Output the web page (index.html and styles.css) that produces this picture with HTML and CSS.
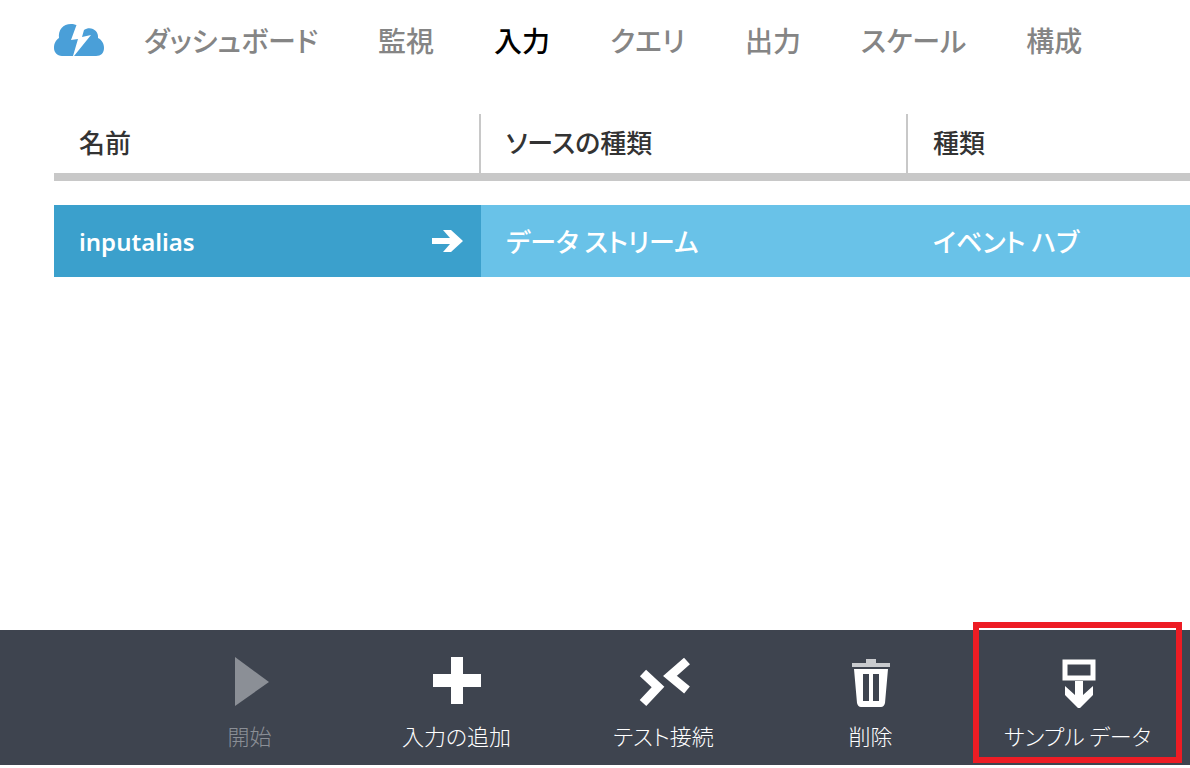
FILE: index.html
```
<!DOCTYPE html>
<html lang="ja">
<head>
    <meta charset="UTF-8">
    <meta name="viewport" content="width=device-width, initial-scale=1.0">
    <title>入力</title>
    <link rel="stylesheet" href="styles.css">
</head>
<body>
    <nav class="tabs">
        <svg class="logo" viewBox="0 0 50 32" aria-hidden="true">
            <path fill="#4a9fd8" d="M8 32C3 32 0 28 0 24C0 19 2 16 5 14C4 6 9 0 17 0C19 0 21 .5 22.500 1L17 16L24 15L19 32Z"/>
            <path fill="#4a9fd8" d="M20 32L37 11L28 13L30 6C37 1.500 45 7 44 14C48 16 50 20 50 24C50 29 47 32 42 32Z"/>
        </svg>
        <a href="#">ダッシュボード</a>
        <a href="#">監視</a>
        <a href="#" class="active" aria-current="page">入力</a>
        <a href="#">クエリ</a>
        <a href="#">出力</a>
        <a href="#">スケール</a>
        <a href="#">構成</a>
    </nav>

    <main class="content">
        <table class="inputs">
            <thead>
                <tr>
                    <th scope="col">名前</th>
                    <th scope="col">ソースの種類</th>
                    <th scope="col" class="last">種類</th>
                </tr>
            </thead>
            <tbody>
                <tr class="spacer"></tr>
                <tr class="selected">
                    <td class="name">
                        <a href="#">
                            inputalias
                            <svg class="arrow" viewBox="0 0 32 24" aria-hidden="true">
                                <path fill="#fff" d="M1 9H19L12 1H20L32 12L20 23H12L19 15H1Z"/>
                            </svg>
                        </a>
                    </td>
                    <td>データ ストリーム</td>
                    <td>イベント ハブ</td>
                </tr>
            </tbody>
        </table>
    </main>

    <!-- Command bar -->
    <footer class="commands">
        <button type="button" disabled>
            <svg viewBox="0 0 52 52" aria-hidden="true">
                <path fill="#8b8f96" d="M11 1L45 26L11 50Z"/>
            </svg>
            <span>開始</span>
        </button>
        <button type="button">
            <svg viewBox="0 0 52 52" aria-hidden="true">
                <path fill="#fff" d="M20 1H32V18H50V31H32V48H20V31H2V18H20Z"/>
            </svg>
            <span>入力の追加</span>
        </button>
        <button type="button">
            <svg viewBox="0 0 52 52" aria-hidden="true">
                <path fill="none" stroke="#fff" stroke-width="9" d="M5 17L20 31L5 47M49 5L32 20L49 34"/>
            </svg>
            <span>テスト接続</span>
        </button>
        <button type="button">
            <svg viewBox="0 0 52 52" aria-hidden="true">
                <path fill="#c9cbce" d="M21 3H31V7H45V11H7V7H21Z"/>
                <path fill="#fff" fill-rule="evenodd" d="M9 13H43L40 47Q39 51 36 51H16Q13 51 12 47ZM18 18V45H24V18ZM28 18V45H34V18Z"/>
            </svg>
            <span>削除</span>
        </button>
        <button type="button" class="highlight">
            <svg viewBox="0 0 52 52" aria-hidden="true">
                <path fill="none" stroke="#fff" stroke-width="5" d="M13 6H41V22H13Z"/>
                <path fill="#fff" d="M23 25H31V39L41 30V39L27 53L13 39V30L23 39Z"/>
            </svg>
            <span>サンプル データ</span>
        </button>
    </footer>
</body>
</html>
```
FILE: styles.css
```
* {
    box-sizing: border-box;
}
body {
    margin: 0;
    padding-bottom: 3px;
    min-height: 100vh;
    display: flex;
    flex-direction: column;
    background-color: #fff;
    font-family: "Noto Sans CJK JP", sans-serif;
    font-feature-settings: "palt";
}
a {
    color: inherit;
    text-decoration: none;
}

/* Top navigation */
.tabs {
    display: flex;
    align-items: center;
    gap: 60px;
    height: 80px;
    padding-left: 54px;
    font-size: 28px;
    font-weight: 500;
    color: #858585;
    white-space: nowrap;
}
.logo {
    flex: none;
    width: 50px;
    height: 32px;
    margin-right: -20px;
}
.tabs .active {
    color: #000;
}

/* Inputs table */
.content {
    flex: 1;
    padding: 34px 0 0 54px;
}
.inputs {
    width: 100%;
    table-layout: fixed;
    border-collapse: separate;
    border-spacing: 0;
    font-size: 26px;
    font-weight: 500;
    text-align: left;
}
.inputs th {
    width: 427px;
    height: 67px;
    padding: 0 25px 12px;
    border-right: 2px solid #c8c8c8;
    box-shadow: inset 0 -8px #c8c8c8;
    color: #333;
    font-weight: 500;
}
.inputs th.last {
    width: auto;
    border-right: 0;
}
.spacer {
    height: 24px;
}
.inputs td {
    height: 72px;
    padding: 0 25px 2px;
    background-color: #69c2e8;
    color: #fff;
}
.inputs .name {
    padding: 0 18px 0 25px;
    background-color: #3ba0cc;
    font-family: "Noto Sans", sans-serif;
    font-size: 24px;
    font-weight: 600;
}
.name a {
    display: flex;
    align-items: center;
    justify-content: space-between;
}
.arrow {
    width: 32px;
    height: 24px;
}

/* Bottom command bar */
.commands {
    display: flex;
    justify-content: flex-end;
    height: 135px;
    padding-right: 9px;
    background-color: #3e444f;
}
.commands button {
    position: relative;
    display: flex;
    flex-direction: column;
    align-items: center;
    flex: 0 1 207px;
    padding: 26px 0 0;
    border: 0;
    background: none;
    color: #fff;
    font-family: inherit;
    font-feature-settings: inherit;
    font-size: 22px;
    font-weight: 300;
    line-height: 30px;
    white-space: nowrap;
}
.commands button:disabled {
    color: #8b8f96;
}
.commands svg {
    width: 52px;
    height: 52px;
    margin-bottom: 12px;
}
/* Red frame that sticks out above the bar */
.highlight::after {
    content: "";
    position: absolute;
    top: -8px;
    right: -1px;
    bottom: 2px;
    left: -1px;
    border: 6px solid #ed1c24;
}
```
